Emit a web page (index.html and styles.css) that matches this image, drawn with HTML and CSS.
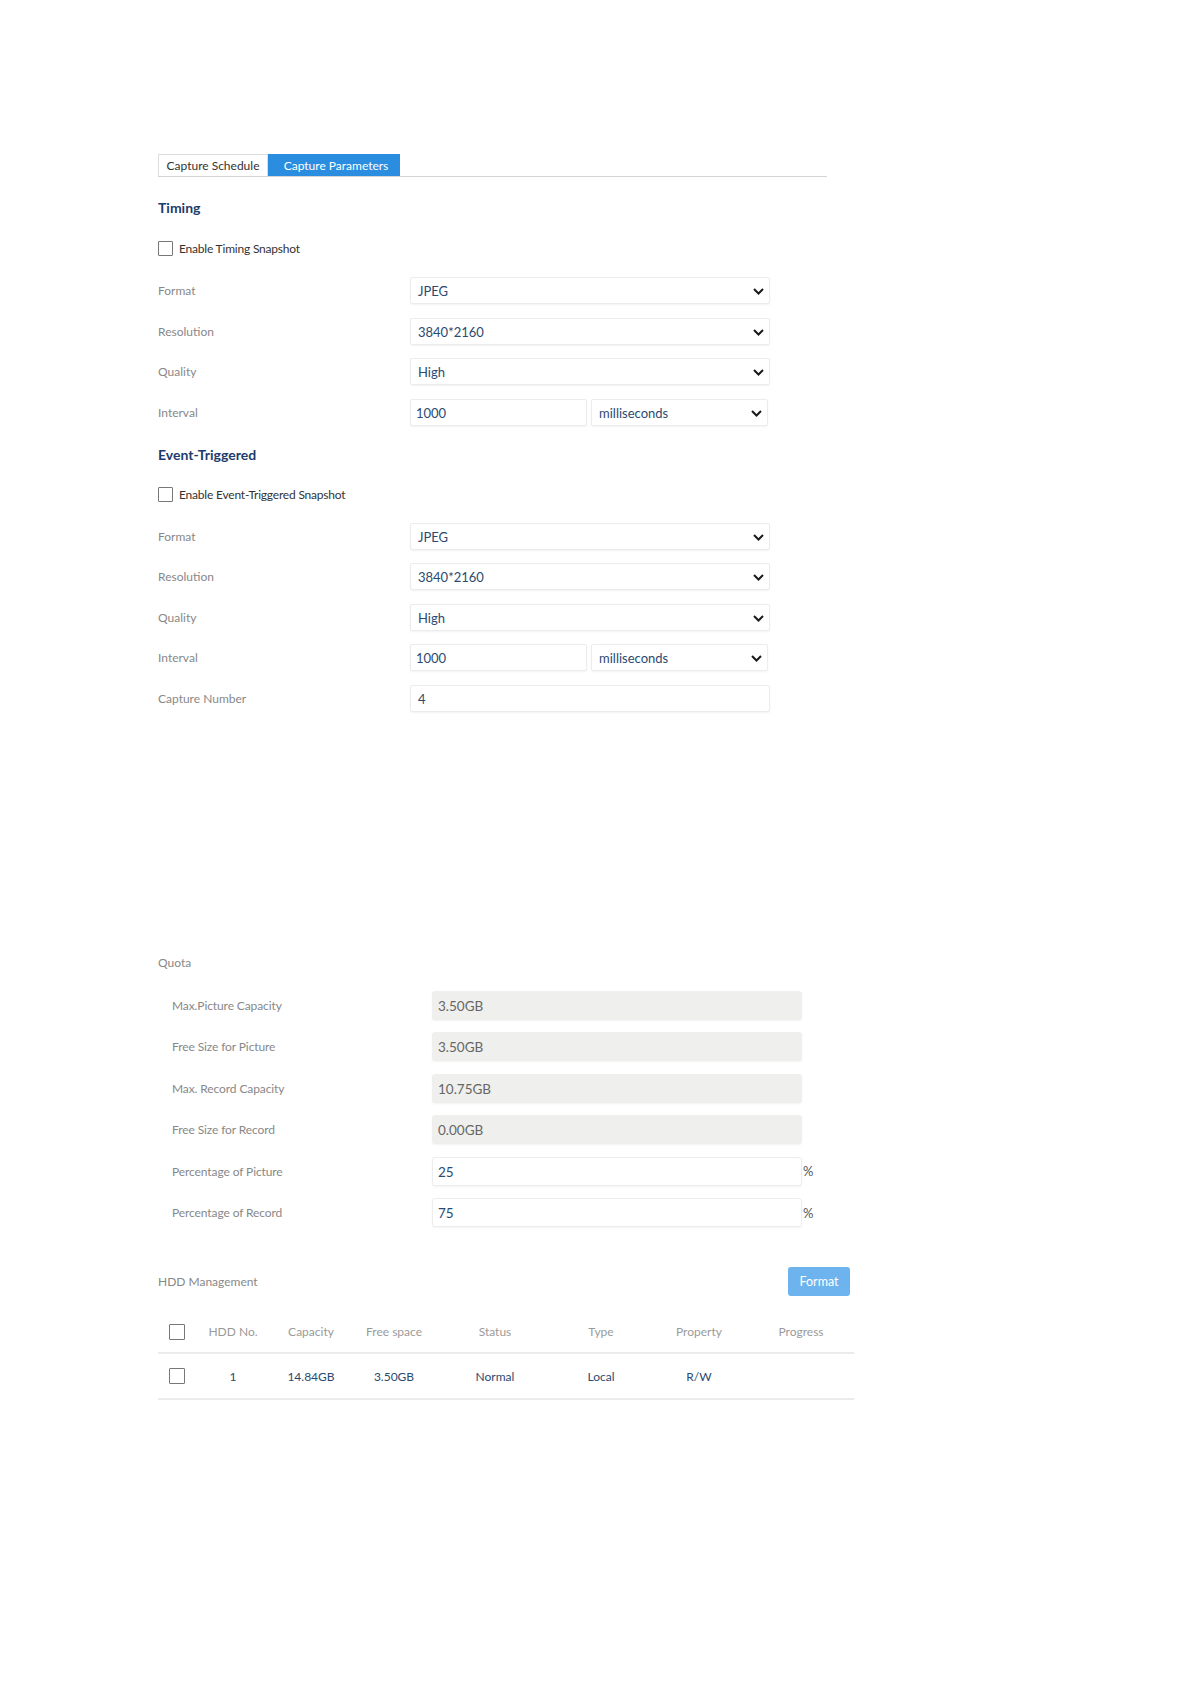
FILE: index.html
```html
<!DOCTYPE html>
<html lang="en">
<head>
<meta charset="UTF-8">
<meta name="viewport" content="width=device-width, initial-scale=1.0">
<title>Capture Parameters</title>
<link rel="stylesheet" href="styles.css">
</head>
<body>
<div class="page">
    <!-- Tabs -->
    <div class="tabs">
        <div class="tab">Capture Schedule</div>
        <div class="tab active">Capture Parameters</div>
    </div>

    <!-- Timing -->
    <div class="section-title">Timing</div>
    <div class="check-row"><span class="checkbox"></span>Enable Timing Snapshot</div>
    <div class="form">
        <div class="form-row">
            <div class="label">Format</div>
            <div class="select wide">JPEG<svg class="chevron" width="11" height="7" viewBox="0 0 11 7"><path d="M1 1 L5.5 5.5 L10 1" /></svg></div>
        </div>
        <div class="form-row">
            <div class="label">Resolution</div>
            <div class="select wide">3840*2160<svg class="chevron" width="11" height="7" viewBox="0 0 11 7"><path d="M1 1 L5.5 5.5 L10 1" /></svg></div>
        </div>
        <div class="form-row">
            <div class="label">Quality</div>
            <div class="select wide">High<svg class="chevron" width="11" height="7" viewBox="0 0 11 7"><path d="M1 1 L5.5 5.5 L10 1" /></svg></div>
        </div>
        <div class="form-row">
            <div class="label">Interval</div>
            <div class="input half">1000</div>
            <div class="select half">milliseconds<svg class="chevron" width="11" height="7" viewBox="0 0 11 7"><path d="M1 1 L5.5 5.5 L10 1" /></svg></div>
        </div>
    </div>

    <!-- Event-Triggered -->
    <div class="section-title event">Event-Triggered</div>
    <div class="check-row"><span class="checkbox"></span>Enable Event-Triggered Snapshot</div>
    <div class="form event-form">
        <div class="form-row">
            <div class="label">Format</div>
            <div class="select wide">JPEG<svg class="chevron" width="11" height="7" viewBox="0 0 11 7"><path d="M1 1 L5.5 5.5 L10 1" /></svg></div>
        </div>
        <div class="form-row">
            <div class="label">Resolution</div>
            <div class="select wide">3840*2160<svg class="chevron" width="11" height="7" viewBox="0 0 11 7"><path d="M1 1 L5.5 5.5 L10 1" /></svg></div>
        </div>
        <div class="form-row">
            <div class="label">Quality</div>
            <div class="select wide">High<svg class="chevron" width="11" height="7" viewBox="0 0 11 7"><path d="M1 1 L5.5 5.5 L10 1" /></svg></div>
        </div>
        <div class="form-row">
            <div class="label">Interval</div>
            <div class="input half">1000</div>
            <div class="select half">milliseconds<svg class="chevron" width="11" height="7" viewBox="0 0 11 7"><path d="M1 1 L5.5 5.5 L10 1" /></svg></div>
        </div>
        <div class="form-row">
            <div class="label">Capture Number</div>
            <div class="input wide">4</div>
        </div>
    </div>

    <!-- Quota -->
    <div class="group-title quota-title">Quota</div>
    <div class="quota">
        <div class="quota-row">
            <div class="quota-label">Max.Picture Capacity</div>
            <div class="field readonly">3.50GB</div>
        </div>
        <div class="quota-row">
            <div class="quota-label">Free Size for Picture</div>
            <div class="field readonly">3.50GB</div>
        </div>
        <div class="quota-row">
            <div class="quota-label">Max. Record Capacity</div>
            <div class="field readonly">10.75GB</div>
        </div>
        <div class="quota-row">
            <div class="quota-label">Free Size for Record</div>
            <div class="field readonly">0.00GB</div>
        </div>
        <div class="quota-row">
            <div class="quota-label">Percentage of Picture</div>
            <div class="field">25</div>
            <span class="unit">%</span>
        </div>
        <div class="quota-row">
            <div class="quota-label">Percentage of Record</div>
            <div class="field">75</div>
            <span class="unit">%</span>
        </div>
    </div>

    <!-- HDD Management -->
    <div class="hdd-bar">
        <div class="group-title">HDD Management</div>
        <button class="format-btn">Format</button>
    </div>
    <div class="hdd-table">
        <div class="hdd-row head">
            <div><span class="checkbox"></span></div>
            <div>HDD No.</div>
            <div>Capacity</div>
            <div>Free space</div>
            <div>Status</div>
            <div>Type</div>
            <div>Property</div>
            <div>Progress</div>
        </div>
        <div class="hdd-row body">
            <div><span class="checkbox"></span></div>
            <div>1</div>
            <div>14.84GB</div>
            <div>3.50GB</div>
            <div>Normal</div>
            <div>Local</div>
            <div>R/W</div>
            <div></div>
        </div>
    </div>
</div>
</body>
</html>
```

FILE: styles.css
```css
/* General formatting */
body {
    font-family: Lato, "Open Sans", sans-serif;
    background-color: #ffffff;
    margin: 0;
    padding: 0;
    color: #333;
}

.page {
    padding: 154px 0 200px 158px;
}

/* Tabs */
.tabs {
    display: flex;
    width: 669px;
    height: 22px;
    border-bottom: 1px solid #d4d4d4;
}

.tab {
    width: 110px;
    box-sizing: border-box;
    text-align: center;
    font-size: 12px;
    line-height: 21px;
    color: #333;
    border: 1px solid #dcdcdc;
    border-bottom: none;
}

.tab.active {
    width: 132px;
    padding-left: 4px;
    background-color: #2b8de0;
    border-color: #2b8de0;
    color: #fff;
}

/* Section headings */
.section-title {
    margin-top: 21px;
    font-size: 14px;
    font-weight: bold;
    line-height: 20px;
    color: #1c3c6c;
}

.section-title.event {
    margin-top: 19px;
}

.check-row {
    display: flex;
    align-items: center;
    margin-top: 20px;
    height: 20px;
    font-size: 12px;
    letter-spacing: -0.2px;
    color: #333;
}

.checkbox {
    display: inline-block;
    width: 13px;
    height: 13px;
    border: 1px solid #777;
    border-radius: 1px;
    margin-right: 6px;
    background: #fff;
}

/* Form rows */
.form {
    display: flex;
    flex-direction: column;
    gap: 13.5px;
    margin-top: 19px;
}

.event-form {
    margin-top: 18px;
}

.form-row {
    display: flex;
    align-items: center;
    height: 27px;
}

.label {
    width: 252px;
    font-size: 12px;
    color: #888;
}

.select, .input {
    position: relative;
    box-sizing: border-box;
    height: 27px;
    line-height: 26px;
    padding-left: 7px;
    font-size: 13px;
    color: #2c4a70;
    background: #fff;
    border: 1px solid #ececec;
    border-radius: 2px;
    box-shadow: 0 1px 2px rgba(0, 0, 0, 0.05);
}

.wide {
    width: 360px;
}

.half {
    width: 177px;
}

.input.half {
    padding-left: 5px;
    margin-right: 4px;
}

.chevron {
    position: absolute;
    right: 5px;
    top: 10px;
}

.chevron path {
    fill: none;
    stroke: #1a1a1a;
    stroke-width: 2;
}

/* Quota */
.group-title {
    font-size: 12px;
    line-height: 20px;
    color: #888;
}

.quota-title {
    margin-top: 241px;
}

.quota {
    display: flex;
    flex-direction: column;
    gap: 12.5px;
    margin-top: 18px;
    padding-left: 14px;
}

.quota-row {
    display: flex;
    align-items: center;
    height: 29px;
}

.quota-label {
    width: 260px;
    font-size: 12px;
    letter-spacing: -0.1px;
    color: #888;
}

.field {
    box-sizing: border-box;
    width: 370px;
    height: 29px;
    line-height: 28px;
    padding-left: 5px;
    font-size: 13.5px;
    color: #2c4a70;
    background: #fff;
    border: 1px solid #ededed;
    border-radius: 3px;
    box-shadow: 0 1px 2px rgba(0, 0, 0, 0.05);
}

.field.readonly {
    background: #efefed;
    border-color: #efefed;
    color: #666;
}

.unit {
    margin-left: 1px;
    font-size: 13px;
    color: #555;
}

/* HDD management */
.hdd-bar {
    display: flex;
    justify-content: space-between;
    align-items: center;
    width: 692px;
    margin-top: 40px;
}

.format-btn {
    width: 62px;
    height: 29px;
    background-color: #6db3ee;
    color: #fff;
    font-family: Lato, sans-serif;
    font-size: 12.5px;
    border: none;
    border-radius: 3px;
    padding: 0;
}

.hdd-table {
    width: 696px;
    margin-top: 15px;
}

.hdd-row {
    display: grid;
    grid-template-columns: 38px 74px 82px 84px 118px 94px 102px 102px;
    align-items: center;
    border-bottom: 2px solid #ebebeb;
    font-size: 12px;
    text-align: center;
}

.hdd-row .checkbox {
    margin: 0;
    display: block;
    margin-left: 11px;
    width: 14px;
    height: 14px;
}

.hdd-row.head {
    height: 41px;
    color: #9a9a9a;
}

.hdd-row.body {
    height: 44px;
    color: #2c4a70;
}
```
